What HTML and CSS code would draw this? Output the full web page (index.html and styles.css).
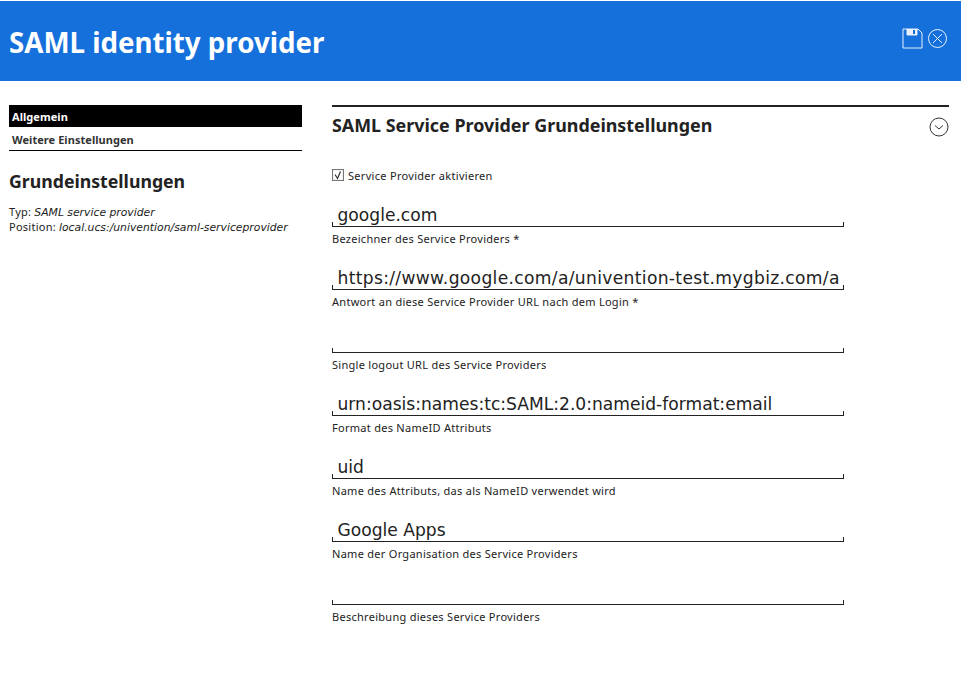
FILE: index.html
```html
<!DOCTYPE html>
<html lang="de">
<head>
    <meta charset="UTF-8">
    <title>SAML identity provider</title>
    <link rel="stylesheet" href="styles.css">
</head>
<body>

    <!-- Header -->
    <div class="header">
        <h1>SAML identity provider</h1>
        <div class="header-icons">
            <svg width="21" height="21" viewBox="0 0 21 21" fill="none" stroke="#fff" opacity="0.9">
                <path d="M1 1H16L20 5V20H1Z"/>
                <path d="M5 1V7H15V1"/>
                <rect x="5" y="1" width="10" height="6" fill="#fff" stroke="none"/>
                <rect x="11" y="2" width="2" height="4" fill="#1570dc" stroke="none"/>
            </svg>
            <svg width="21" height="21" viewBox="0 0 21 21" fill="none" stroke="#fff" opacity="0.9">
                <circle cx="10.5" cy="10.5" r="9"/>
                <path d="M6 6L15 15M15 6L6 15"/>
            </svg>
        </div>
    </div>

    <div class="content">
        <!-- Left navigation -->
        <div class="sidebar">
            <div class="tabs">
                <div class="tab tab-active">Allgemein</div>
                <div class="tab">Weitere Einstellungen</div>
            </div>
            <h2>Grundeinstellungen</h2>
            <p class="meta">Typ: <em>SAML service provider</em></p>
            <p class="meta">Position: <em>local.ucs:/univention/saml-serviceprovider</em></p>
        </div>

        <!-- Form -->
        <div class="main">
            <div class="section-title">
                <h3>SAML Service Provider Grundeinstellungen</h3>
                <svg class="collapse" width="20" height="20" viewBox="0 0 20 20" fill="none" stroke="#333">
                    <circle cx="10" cy="10" r="9"/>
                    <path d="M6 8.5L10 12L14 8.5"/>
                </svg>
            </div>

            <label class="check">
                <span class="checkbox">
                    <svg width="12" height="12" viewBox="0 0 12 12" fill="none" stroke="#333" stroke-width="1.2">
                        <rect x="0.5" y="0.5" width="11" height="11" stroke="#777"/>
                        <path d="M3 5.5L5.5 9.5L8.5 2.5"/>
                    </svg>
                </span>
                Service Provider aktivieren
            </label>

            <div class="field">
                <div class="field-box"><input class="field-input" type="text" value="google.com" readonly></div>
                <div class="field-label">Bezeichner des Service Providers *</div>
            </div>
            <div class="field">
                <div class="field-box"><input class="field-input field-url" type="text" value="https://www.google.com/a/univention-test.mygbiz.com/acs" readonly></div>
                <div class="field-label">Antwort an diese Service Provider URL nach dem Login *</div>
            </div>
            <div class="field">
                <div class="field-box"><input class="field-input" type="text" readonly></div>
                <div class="field-label">Single logout URL des Service Providers</div>
            </div>
            <div class="field">
                <div class="field-box"><input class="field-input" type="text" value="urn:oasis:names:tc:SAML:2.0:nameid-format:email" readonly></div>
                <div class="field-label">Format des NameID Attributs</div>
            </div>
            <div class="field">
                <div class="field-box"><input class="field-input" type="text" value="uid" readonly></div>
                <div class="field-label">Name des Attributs, das als NameID verwendet wird</div>
            </div>
            <div class="field">
                <div class="field-box"><input class="field-input" type="text" value="Google Apps" readonly></div>
                <div class="field-label">Name der Organisation des Service Providers</div>
            </div>
            <div class="field">
                <div class="field-box"><input class="field-input" type="text" readonly></div>
                <div class="field-label">Beschreibung dieses Service Providers</div>
            </div>
        </div>
    </div>

</body>
</html>
```

FILE: styles.css
```css
html, body {
    height: 100%;
}

body {
    margin: 0;
    background-color: #fff;
    color: #222;
    font-family: "Noto Sans", sans-serif;
    overflow: hidden;
}

.header {
    height: 80px;
    margin-top: 1px;
    padding: 0 13px 0 9px;
    background-color: #1570dc;
    display: flex;
    justify-content: space-between;
}

.header h1 {
    margin: 20px 0 0;
    color: #fff;
    font-size: 27.7px;
    line-height: 42px;
    font-weight: 700;
}

.header-icons {
    display: flex;
    align-items: flex-start;
    gap: 4px;
    padding-top: 27px;
}

.content {
    display: flex;
    padding: 24px 12px 0 9px;
}

.sidebar {
    width: 293px;
    margin-right: 30px;
    flex: none;
}

.tabs {
    border-bottom: 1px solid #000;
}

.tab {
    height: 23px;
    line-height: 25px;
    padding-left: 3px;
    font-size: 11px;
    font-weight: 700;
    letter-spacing: 0.05px;
    color: #333;
}

.tab-active {
    height: 22px;
    line-height: 24px;
    background-color: #000;
    color: #fff;
}

.sidebar h2 {
    margin: 18px 0 11px;
    font-size: 17.7px;
    line-height: 24px;
    font-weight: 700;
}

.meta {
    margin: 0;
    height: 15px;
    font-size: 11px;
    line-height: 15px;
    letter-spacing: 0.25px;
}

.meta em {
    font-family: "DejaVu Sans", sans-serif;
    font-size: 10.8px;
    line-height: 1;
    letter-spacing: 0;
}

.main {
    flex: 1;
    border-top: 2px solid #222;
}

.section-title {
    display: flex;
    justify-content: space-between;
    height: 60px;
}

.section-title h3 {
    margin: 6px 0 0;
    font-size: 17.9px;
    line-height: 24px;
    font-weight: 700;
}

.collapse {
    margin-top: 10px;
}

.check {
    display: flex;
    align-items: center;
    gap: 4px;
    height: 16px;
    font-size: 11px;
    letter-spacing: 0.3px;
    margin-bottom: 19px;
}

.checkbox {
    display: flex;
}

.field {
    width: 512px;
    height: 63px;
}

.field-box {
    height: 25px;
    position: relative;
}

.field-box::before,
.field-box::after {
    content: "";
    position: absolute;
    bottom: 0;
    width: 1px;
    height: 5px;
    background-color: #222;
}

.field-box::before {
    left: 0;
}

.field-box::after {
    right: 0;
}

.field-input {
    display: block;
    width: 100%;
    height: 25px;
    box-sizing: border-box;
    margin: 0;
    padding: 1px 4px 0 5.5px;
    border: none;
    border-bottom: 1px solid #222;
    outline: none;
    background: none;
    color: #222;
    font-family: "DejaVu Sans", sans-serif;
    font-size: 17.12px;
    line-height: 24px;
}

.field-url {
    letter-spacing: 0.33px;
}

.field-label {
    margin-top: 4px;
    font-size: 11px;
    line-height: 15px;
    letter-spacing: 0.28px;
}
```
